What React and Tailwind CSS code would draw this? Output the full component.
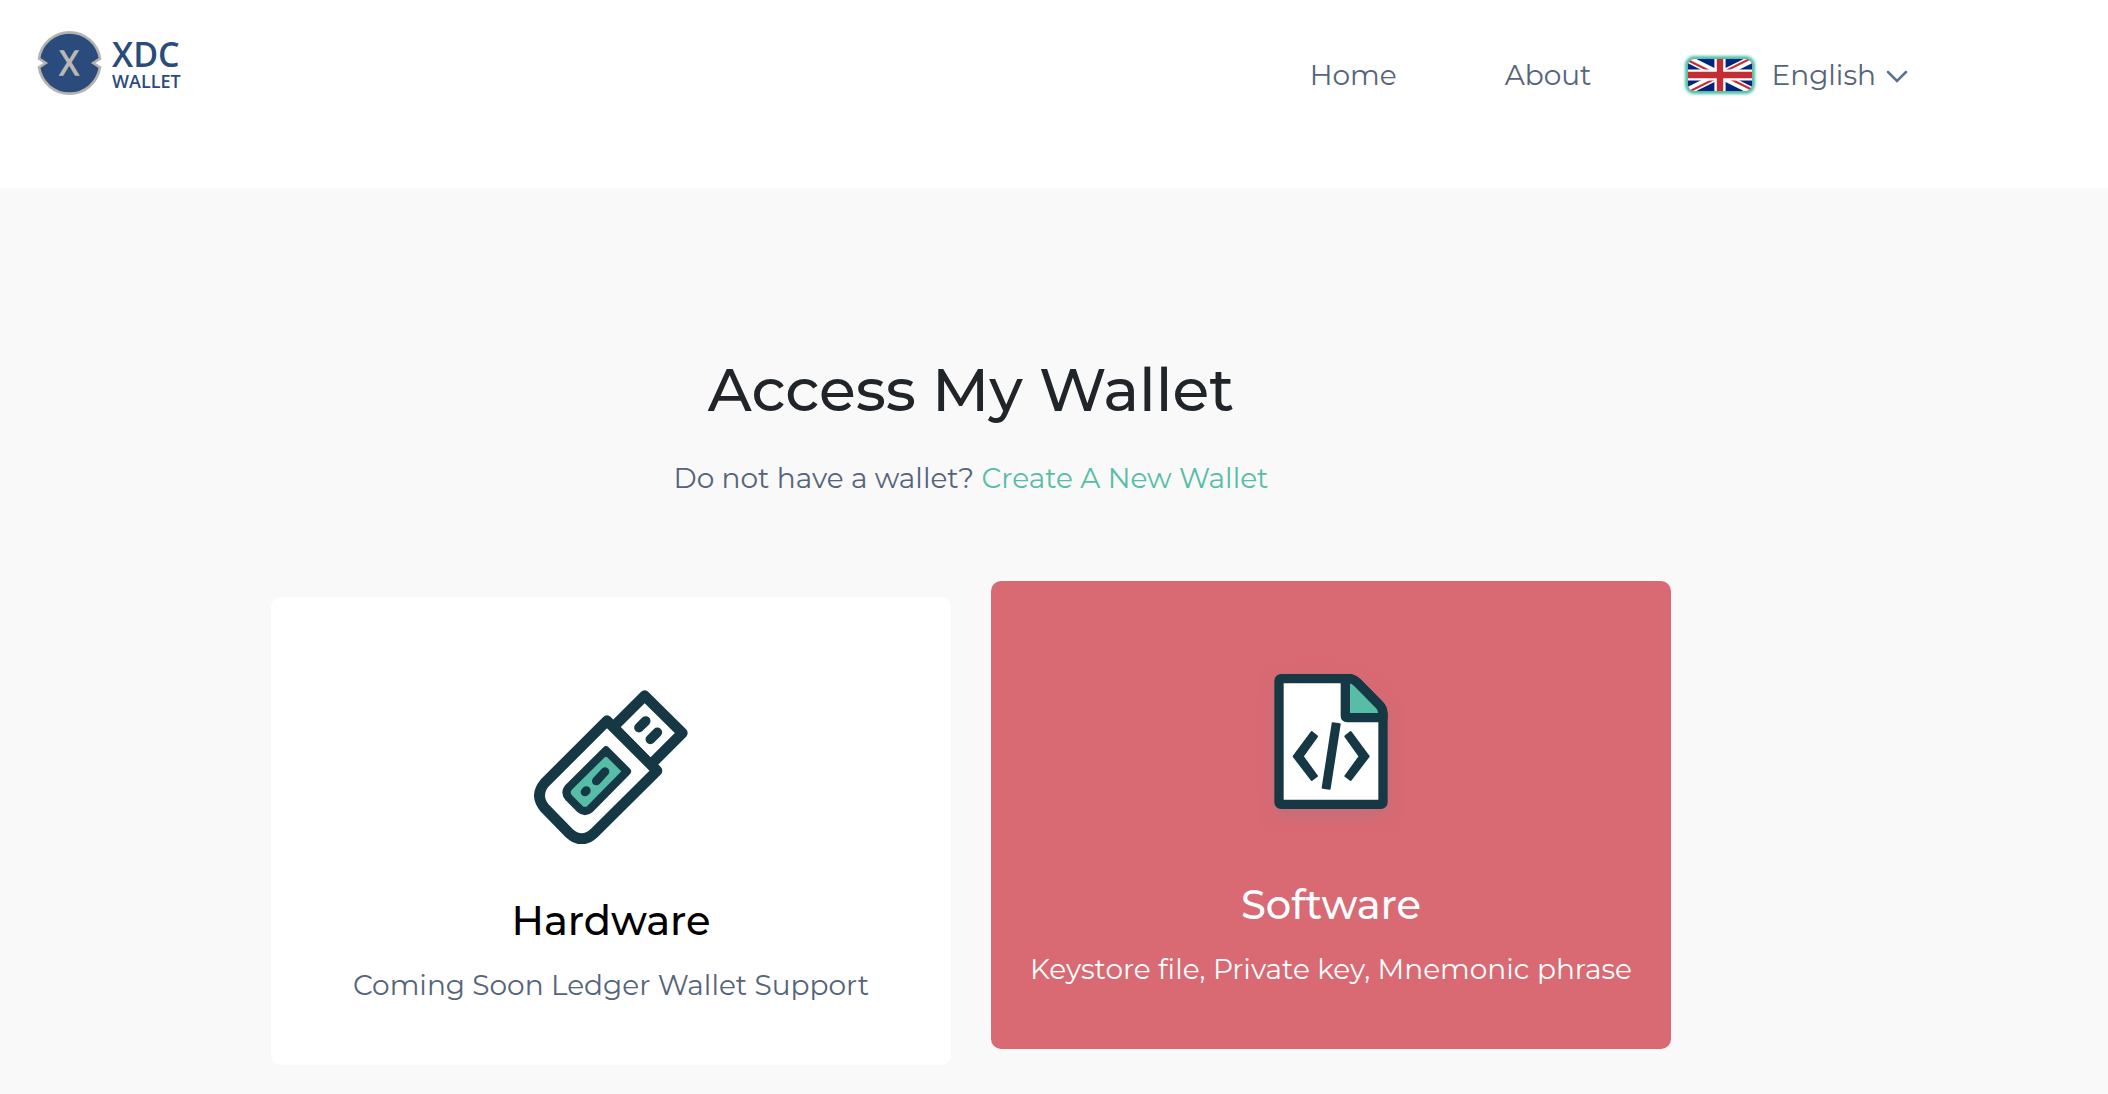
import React, { useState } from "react";

// ──────────────────────────────────────────────
//  Icons
// ──────────────────────────────────────────────
function CoinIcon() {
  return (
    <svg viewBox="0 0 196 198" className="w-[65px] h-[66px] shrink-0" aria-hidden="true">
      <path
        d="M6 86 A93 93 0 0 1 190 86 L170 99 L190 112 A93 93 0 0 1 6 112 L26 99 Z"
        fill="#2c4b7d"
        stroke="#b5b3b0"
        strokeWidth="8"
      />
      <text
        x="97"
        y="135"
        textAnchor="middle"
        fontSize="98"
        fill="#b9b8b4"
        stroke="#b9b8b4"
        strokeWidth="4"
      >
        X
      </text>
    </svg>
  );
}

function FlagIcon() {
  return (
    <svg
      viewBox="0 0 60 30"
      className="w-16 h-8 rounded-md shadow-[0_0_3px_3px_#4fbea6]"
      aria-hidden="true"
    >
      <clipPath id="flag-box">
        <path d="M0 0h60v30H0z" />
      </clipPath>
      <clipPath id="flag-diag">
        <path d="M30 15h30v15zv15H0zH0V0zV0h30z" />
      </clipPath>
      <g clipPath="url(#flag-box)">
        <path d="M0 0h60v30H0z" fill="#00247d" />
        <path d="M0 0l60 30m0-30L0 30" stroke="#fff" strokeWidth="7" />
        <path d="M0 0l60 30m0-30L0 30" clipPath="url(#flag-diag)" stroke="#c32d33" strokeWidth="4" />
        <path d="M30 0v30M0 15h60" stroke="#fff" strokeWidth="10.500" />
        <path d="M30 0v30M0 15h60" stroke="#c32d33" strokeWidth="6" />
      </g>
    </svg>
  );
}

function ChevronIcon() {
  return (
    <svg viewBox="0 0 22 14" className="w-[22px] h-[14px] mt-1" fill="none" aria-hidden="true">
      <path d="M2 2 L11 11 L20 2" stroke="#5b7290" strokeWidth="2.500" strokeLinecap="round" />
    </svg>
  );
}

function UsbIcon() {
  return (
    <svg viewBox="101 89 462 462" className="w-[154px] h-[154px]" fill="none" aria-hidden="true">
      <g stroke="#163845" strokeLinejoin="round" strokeLinecap="round">
        <path
          d="M320 181 L470 331 L281 519 Q244 552 207 519 L133 443 Q102 406 133 368 Z"
          fill="#fff"
          strokeWidth="32"
        />
        <path d="M351 188 L433 106 L546 218 L462 302" fill="#fff" strokeWidth="32" />
        <path
          d="M317 270 L380 333 L270 445 Q254 459 238 445 L206 413 Q191 396 206 380 Z"
          fill="#57bda7"
          strokeWidth="24"
        />
        <path d="M416 202 L436 182 M450 237 L471 216" strokeWidth="29" />
        <path d="M288 362 L314 334 M254 395 L258 391" strokeWidth="26" />
      </g>
    </svg>
  );
}

function CodeFileIcon() {
  return (
    <svg
      viewBox="100 99 342 405"
      className="w-[114px] h-[135px] drop-shadow-[0_6px_8px_rgba(120,130,130,0.25)]"
      fill="none"
      aria-hidden="true"
    >
      <g stroke="#163845" strokeWidth="28" strokeLinejoin="round">
        <path
          d="M122 113 H324 Q337 113 349 124 L417 193 Q427 203 427 218 V483 Q427 490 420 490 H122 Q115 490 115 483 V120 Q115 113 122 113 Z"
          fill="#fff"
        />
        <path d="M314 115 L324 113 Q337 113 349 124 L417 193 Q427 203 427 230 H319 Q314 230 314 225 Z" fill="#57bda7" />
      </g>
      <g stroke="#163845" strokeWidth="6" strokeLinejoin="round" fill="#163845">
        <path d="M213 273 L229 286 L186 346 L229 405 L213 417 L159 346 Z" />
        <path d="M330 273 L314 286 L357 346 L314 405 L330 417 L384 346 Z" />
        <path d="M276 247 L297 250 L267 443 L246 440 Z" />
      </g>
    </svg>
  );
}

// ──────────────────────────────────────────────
//  Access option card
// ──────────────────────────────────────────────
function OptionCard({ icon, title, text, active, onSelect }) {
  return (
    <button
      type="button"
      onClick={onSelect}
      className={`flex flex-1 flex-col items-center rounded-[10px] px-6 pt-[93px] pb-14 cursor-pointer ${
        active ? "-translate-y-4 bg-[#d96973] text-white" : "bg-white text-black"
      }`}
    >
      <span className="h-[155px]">{icon}</span>
      <span className="mt-[52px] text-[40px] leading-[48px] font-medium">{title}</span>
      <span className={`mt-4 text-[28px] leading-[48px] ${active ? "text-white" : "text-[#56647b]"}`}>
        {text}
      </span>
    </button>
  );
}

const OPTIONS = [
  { id: "hardware", title: "Hardware", text: "Coming Soon Ledger Wallet Support", icon: <UsbIcon /> },
  { id: "software", title: "Software", text: "Keystore file, Private key, Mnemonic phrase", icon: <CodeFileIcon /> },
];

export default function App() {
  const [selected, setSelected] = useState("software");

  return (
    <div className="min-h-screen bg-[#f9f9f9] font-[Montserrat,Inter,sans-serif] text-[#56647b]">
      {/* Header */}
      <header className="flex h-[188px] items-start justify-between bg-white pl-[37px] pr-[200px]">
        <a href="#" className="mt-[30px] flex items-center gap-[10px] text-[#2c4b7d] font-['Open_Sans',sans-serif]">
          <CoinIcon />
          <span className="flex flex-col font-semibold">
            <span className="text-[34px] leading-9">XDC</span>
            <span className="text-[18px] leading-[18px]">WALLET</span>
          </span>
        </a>
        <nav className="mt-[51px] flex items-center text-[28px] leading-[48px]">
          <a href="#" className="mr-[108px]">Home</a>
          <a href="#" className="mr-[96px]">About</a>
          <button type="button" className="flex items-center cursor-pointer">
            <FlagIcon />
            <span className="ml-5 mr-[10px]">English</span>
            <ChevronIcon />
          </button>
        </nav>
      </header>

      {/* Access options */}
      <main className="pl-[271px] pr-[437px] pt-[166px]">
        <div className="text-center">
          <h1 className="text-[60px] leading-[72px] font-medium text-[#212529]">Access My Wallet</h1>
          <p className="mt-7 text-[28px] leading-[48px]">
            Do not have a wallet? <a href="#" className="text-[#57bda7]">Create A New Wallet</a>
          </p>
        </div>
        <div className="mt-[95px] flex gap-10">
          {OPTIONS.map((o) => (
            <OptionCard
              key={o.id}
              icon={o.icon}
              title={o.title}
              text={o.text}
              active={selected === o.id}
              onSelect={() => setSelected(o.id)}
            />
          ))}
        </div>
      </main>
    </div>
  );
}
